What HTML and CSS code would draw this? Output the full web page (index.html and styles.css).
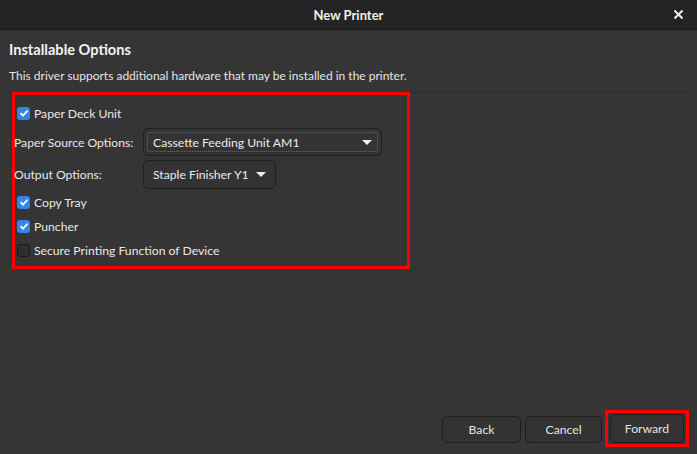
FILE: index.html
```html
<!DOCTYPE html>
<html>
<head>
<meta charset="utf-8">
<link rel="stylesheet" href="styles.css">
</head>
<body>
<div class="window">
  <header class="titlebar">
    <span class="title">New Printer</span>
    <svg class="close" width="9" height="9" viewBox="0 0 9 9"><path d="M1.2 1.2 L7.8 7.8 M7.8 1.2 L1.2 7.8" stroke="#eeeeee" stroke-width="2" stroke-linecap="square"/></svg>
  </header>
  <main class="content">
    <h1 class="heading">Installable Options</h1>
    <p class="desc">This driver supports additional hardware that may be installed in the printer.</p>
    <div class="sep"></div>
    <section class="highlight">
      <label class="check-row top"><span class="cb on"><svg width="10" height="10" viewBox="0 0 10 10"><path d="M1.5 5.2 L4 7.6 L8.6 2.6" fill="none" stroke="#fff" stroke-width="1.8"/></svg></span>Paper Deck Unit</label>
      <div class="combo-row">
        <span class="combo-label">Paper Source Options:</span>
        <div class="combo wide focused"><span class="combo-text">Cassette Feeding Unit AM1</span><span class="arrow"></span></div>
      </div>
      <div class="combo-row">
        <span class="combo-label">Output Options:</span>
        <div class="combo narrow"><span class="combo-text">Staple Finisher Y1</span><span class="arrow"></span></div>
      </div>
      <label class="check-row first-after"><span class="cb on"><svg width="10" height="10" viewBox="0 0 10 10"><path d="M1.5 5.2 L4 7.6 L8.6 2.6" fill="none" stroke="#fff" stroke-width="1.8"/></svg></span>Copy Tray</label>
      <label class="check-row"><span class="cb on"><svg width="10" height="10" viewBox="0 0 10 10"><path d="M1.5 5.2 L4 7.6 L8.6 2.6" fill="none" stroke="#fff" stroke-width="1.8"/></svg></span>Puncher</label>
      <label class="check-row"><span class="cb off"></span>Secure Printing Function of Device</label>
    </section>
  </main>
  <footer class="actions">
    <button class="btn back">Back</button>
    <button class="btn cancel">Cancel</button>
    <div class="btn-mark"><button class="btn fwd">Forward</button></div>
  </footer>
</div>
</body>
</html>
```

FILE: styles.css
```css
* { box-sizing: border-box; }
html, body { margin: 0; padding: 0; }
body {
  width: 697px;
  height: 454px;
  background: #353535;
  font-family: "Lato", "Noto Sans", sans-serif;
  color: #e8e8e8;
  font-size: 12px;
  overflow: hidden;
}
.window {
  height: 454px;
  display: flex;
  flex-direction: column;
}
.titlebar {
  height: 30px;
  flex: none;
  background: #242424;
  border-bottom: 1px solid #1a1a1a;
  display: flex;
  align-items: center;
  justify-content: center;
  position: relative;
}
.title {
  font-weight: bold;
  font-size: 13px;
  color: #f0f0f0;
}
.close {
  position: absolute;
  right: 14px;
  top: 10px;
}
.content {
  padding: 11px 9px 0 9px;
}
.heading {
  margin: 0;
  font-size: 14.6px;
  font-weight: bold;
  color: #f2f2f2;
  line-height: 18px;
}
.desc {
  margin: 9px 0 0 0;
  font-size: 12px;
  line-height: 16px;
  color: #e4e4e4;
}
.sep {
  margin-top: 8px;
  height: 1px;
  background: #2a2a2a;
}
.highlight {
  margin-left: 3px;
  width: 398px;
  height: 177px;
  border: 3px solid #ff0000;
  margin-top: -1px;
  padding: 11px 0 0 2px;
  display: flex;
  flex-direction: column;
}
.check-row {
  display: flex;
  align-items: center;
  height: 14px;
  gap: 4px;
  margin-bottom: 10px;
  font-size: 12.2px;
}
.check-row.top { margin-bottom: 8px; }
.check-row.first-after { margin-top: 2px; }
.cb {
  width: 13px;
  height: 13px;
  border-radius: 3px;
  flex: none;
  display: flex;
  align-items: center;
  justify-content: center;
}
.cb.on { background: #3584e4; }
.cb.off { background: #2e2e2e; border: 1px solid #1a1a1a; }
.combo-row {
  display: flex;
  align-items: center;
  margin-left: -3px;
  margin-bottom: 4px;
}
.combo-label {
  width: 129px;
  font-size: 12.2px;
}
.combo {
  border: 1px solid #1f1f1f;
  border-radius: 5px;
  background: #333333;
  display: flex;
  align-items: center;
  padding: 0 8px 0 9px;
  position: relative;
}
.combo.wide { width: 239px; height: 28px; }
.combo.narrow { width: 133px; height: 29px; }
.combo.focused::after {
  content: "";
  position: absolute;
  left: 3px; top: 3px; right: 3px; bottom: 3px;
  border: 1px dotted #6a6a6a;
  border-radius: 3px;
}
.combo-text { flex: 1; font-size: 12.2px; color: #ececec; }
.arrow {
  width: 0; height: 0;
  border-left: 5px solid transparent;
  border-right: 5px solid transparent;
  border-top: 5px solid #f0f0f0;
  margin-right: 1px;
}
.actions {
  margin-top: auto;
  display: flex;
  justify-content: flex-end;
  align-items: flex-end;
  padding: 0 8px 7px 0;
}
.btn {
  font-family: inherit;
  font-size: 12.2px;
  color: #e6e6e6;
  background: #333333;
  border: 1px solid #1f1f1f;
  border-radius: 5px;
  height: 27px;
  margin-bottom: 4px;
}
.btn.back { width: 79px; }
.btn.cancel { width: 77px; margin-left: 4px; margin-right: 3px; }
.btn-mark {
  border: 3px solid #ff0000;
  padding: 1px 2px 0 2px;
  width: 84px;
  height: 37px;
}
.btn.fwd { width: 74px; margin: 0; height: 29px; }
```
